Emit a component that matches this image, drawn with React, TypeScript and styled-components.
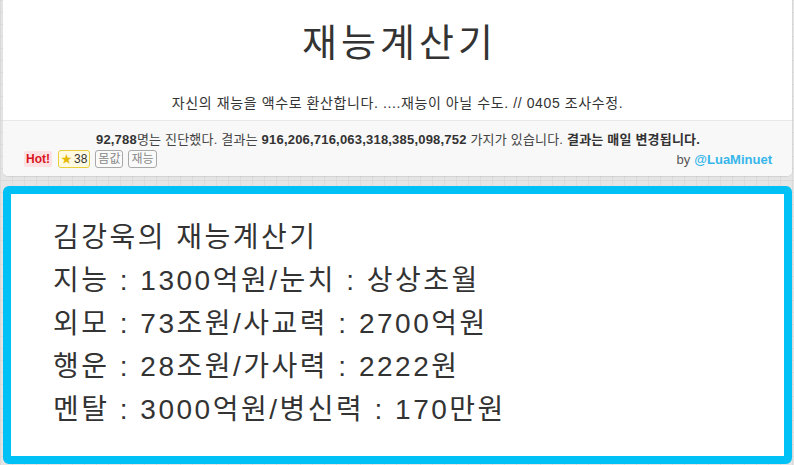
import React from "react";
import styled, { createGlobalStyle } from "styled-components";

const Global = createGlobalStyle`
  html, body { margin: 0; padding: 0; }
  body {
    width: 794px;
    height: 465px;
    overflow: hidden;
    background-color: #e5e5e5;
    background-image:
      linear-gradient(to right, #dadada 1px, transparent 1px),
      linear-gradient(to bottom, #dadada 1px, transparent 1px);
    background-size: 12px 12px;
    font-family: "Liberation Sans", "Noto Sans CJK KR", sans-serif;
    color: #333;
  }
`;

const Page = styled.div`
  display: flex;
  flex-direction: column;
  gap: 10px;
  padding: 0 2px 0 3px;
`;

const Card = styled.div`
  background: #fff;
  border-radius: 0 0 5px 5px;
  box-shadow: 0 1px 1px rgba(0, 0, 0, 0.08);
  overflow: hidden;
`;

const Head = styled.div`
  display: flex;
  flex-direction: column;
  align-items: center;
  padding: 16px 0 0;
  height: 104px;
  border-bottom: 1px solid #e8e8e8;
`;

const Title = styled.h1`
  margin: 0;
  padding-left: 4px;
  font-family: "Noto Sans CJK KR", sans-serif;
  font-weight: 400;
  font-size: 38px;
  line-height: 48px;
  letter-spacing: 4px;
  color: #333;
`;

const Sub = styled.p`
  margin: 30px 0 0;
  font-size: 14px;
  line-height: 18px;
  letter-spacing: 0.6px;
  color: #333;
`;

const Foot = styled.div`
  background: #f8f8f8;
  padding: 10px 20px 8px 21px;
  display: flex;
  flex-direction: column;
  gap: 2px;
`;

const Stats = styled.div`
  text-align: center;
  font-size: 13px;
  line-height: 17px;
  letter-spacing: 0.2px;
  color: #444;
  b { font-weight: 700; color: #333; }
`;

const Meta = styled.div`
  display: flex;
  align-items: center;
  justify-content: space-between;
`;

const Tags = styled.div`
  display: flex;
  align-items: center;
  gap: 5px;
`;

const Hot = styled.span`
  font-size: 12px;
  line-height: 16px;
  font-weight: 700;
  color: #d9141e;
  background: #fde2e4;
  padding: 0 2px;
  border-radius: 2px;
  margin-right: 1px;
`;

const Badge = styled.span<{ $tone?: "star" | "plain" }>`
  font-size: 12px;
  line-height: 16px;
  padding: 0 2px;
  border-radius: 3px;
  border: 1px solid ${(p) => (p.$tone === "star" ? "#e8cf3a" : "#a8a8a8")};
  background: ${(p) => (p.$tone === "star" ? "#fffbe3" : "#fafafa")};
  color: ${(p) => (p.$tone === "star" ? "#333" : "#888")};
`;

const Star = styled.span`
  color: #e6b800;
  font-size: 11px;
  margin-right: 2px;
`;

const By = styled.div`
  font-size: 13px;
  color: #555;
  a {
    color: #36b6ea;
    font-weight: 700;
    text-decoration: none;
    margin-left: 4px;
  }
`;

const Result = styled.div`
  border: 8px solid #00c1f6;
  border-radius: 6px;
  background: #fff;
  padding: 22px 40px 25px 42px;
`;

const Line = styled.div`
  font-size: 28px;
  line-height: 43px;
  letter-spacing: 2.5px;
  color: #333;
  white-space: nowrap;
`;

const lines = [
  "김강욱의 재능계산기",
  "지능 : 1300억원/눈치 : 상상초월",
  "외모 : 73조원/사교력 : 2700억원",
  "행운 : 28조원/가사력 : 2222원",
  "멘탈 : 3000억원/병신력 : 170만원",
];

export default function App() {
  return (
    <>
      <Global />
      <Page>
        <Card>
          <Head>
            <Title>재능계산기</Title>
            <Sub>자신의 재능을 액수로 환산합니다. ....재능이 아닐 수도. // 0405 조사수정.</Sub>
          </Head>
          <Foot>
            <Stats>
              <b>92,788</b>명는 진단했다. 결과는 <b>916,206,716,063,318,385,098,752</b> 가지가 있습니다.{" "}
              <b>결과는 매일 변경됩니다.</b>
            </Stats>
            <Meta>
              <Tags>
                <Hot>Hot!</Hot>
                <Badge $tone="star">
                  <Star>★</Star>38
                </Badge>
                <Badge>몸값</Badge>
                <Badge>재능</Badge>
              </Tags>
              <By>
                by<a href="#">@LuaMinuet</a>
              </By>
            </Meta>
          </Foot>
        </Card>
        <Result>
          {lines.map((l) => (
            <Line key={l}>{l}</Line>
          ))}
        </Result>
      </Page>
    </>
  );
}
